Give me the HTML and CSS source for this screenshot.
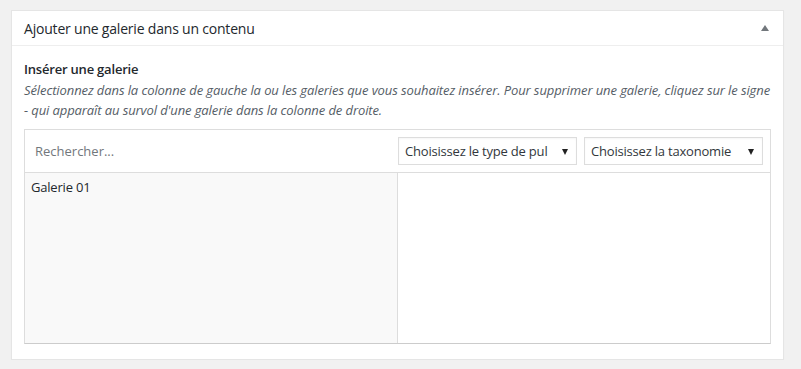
FILE: index.html
```html
<!DOCTYPE html>
<html lang="fr">
<head>
    <meta charset="UTF-8">
    <meta name="viewport" content="width=device-width, initial-scale=1.0">
    <title>Ajouter une galerie</title>
    <link rel="stylesheet" href="styles.css">
</head>
<body>
    <div class="postbox">
        <div class="postbox-header">
            <h2>Ajouter une galerie dans un contenu</h2>
            <span class="toggle"></span>
        </div>
        <div class="inside">
            <h3>Insérer une galerie</h3>
            <p class="description">Sélectionnez dans la colonne de gauche la ou les galeries que vous souhaitez insérer. Pour supprimer une galerie, cliquez sur le signe - qui apparaît au survol d'une galerie dans la colonne de droite.</p>
            <div class="picker">
                <div class="picker-bar">
                    <input type="text" class="search" placeholder="Rechercher...">
                    <div class="select"><span class="select-label">Choisissez le type de pul</span></div>
                    <div class="select"><span class="select-label">Choisissez la taxonomie</span></div>
                </div>
                <div class="picker-cols">
                    <ul class="col col-left">
                        <li>Galerie 01</li>
                    </ul>
                    <ul class="col col-right"></ul>
                </div>
            </div>
        </div>
    </div>
</body>
</html>
```

FILE: styles.css
```css
body {
    margin: 0;
    background: #f1f1f1;
    font-family: "Open Sans", "Noto Sans", sans-serif;
    color: #23282d;
    font-size: 13px;
    padding: 10px 17px 0 11px;
}
.postbox {
    background: #fff;
    border: 1px solid #e5e5e5;
    box-shadow: 0 1px 1px rgba(0, 0, 0, 0.04);
}
.postbox-header {
    display: flex;
    align-items: center;
    justify-content: space-between;
    height: 34px;
    padding: 0 12px;
    border-bottom: 1px solid #eee;
}
.postbox-header h2 {
    margin: 0;
    font-size: 14px;
    font-weight: 400;
    letter-spacing: -0.2px;
}
.toggle {
    width: 0;
    height: 0;
    border-left: 4px solid transparent;
    border-right: 4px solid transparent;
    border-bottom: 6px solid #72777c;
    margin-right: 2px;
}
.inside {
    padding: 14px 12px 15px;
}
.inside h3 {
    margin: 0 0 2px;
    font-size: 13px;
    font-weight: 600;
    letter-spacing: -0.2px;
}
.description {
    margin: 0 0 9px;
    font-style: italic;
    font-size: 13px;
    line-height: 20px;
    color: #555d66;
    letter-spacing: -0.1px;
}
.picker {
    border: 1px solid #ddd;
    border-bottom-color: #ccc;
}
.picker-bar {
    display: flex;
    align-items: center;
    height: 42px;
    padding: 0 7px 0 10px;
    gap: 7px;
    border-bottom: 1px solid #ddd;
}
.search {
    flex: 1;
    border: none;
    outline: none;
    font: inherit;
    font-size: 13px;
    padding: 0;
}
.search::placeholder {
    color: #72777c;
}
.select {
    position: relative;
    box-sizing: border-box;
    width: 179px;
    height: 28px;
    line-height: 26px;
    border: 1px solid #ddd;
    padding: 0 20px 0 6px;
    font-size: 13px;
    color: #32373c;
    letter-spacing: -0.2px;
    box-shadow: inset 0 1px 2px rgba(0, 0, 0, 0.04);
}
.select-label {
    display: block;
    white-space: nowrap;
    overflow: hidden;
}
.select::after {
    content: "";
    position: absolute;
    right: 8px;
    top: 11px;
    border-left: 3.5px solid transparent;
    border-right: 3.5px solid transparent;
    border-top: 6px solid #222;
}
.picker-cols {
    display: flex;
    height: 170px;
}
.col {
    flex: 1;
    margin: 0;
    padding: 0;
    list-style: none;
}
.col-left {
    background: #f9f9f9;
    border-right: 1px solid #ddd;
}
.col-left li {
    padding: 5px 6px;
    line-height: 18px;
    font-size: 13px;
    letter-spacing: -0.2px;
}
```
